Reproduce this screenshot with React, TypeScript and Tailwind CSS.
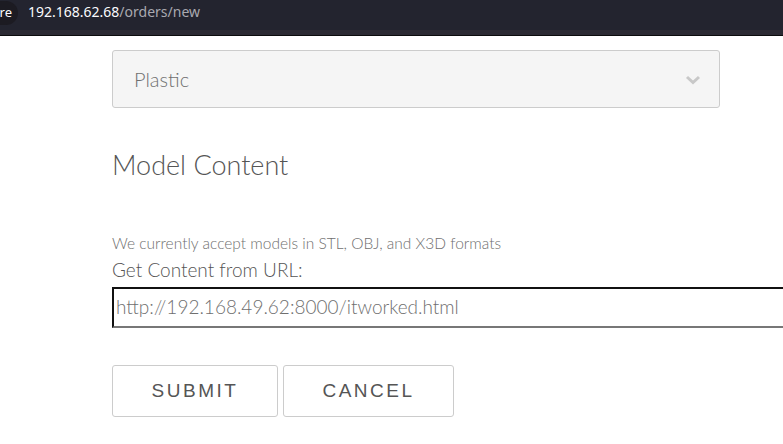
export default function App() {
  return (
    <div className="w-[783px] h-[444px] overflow-hidden bg-white font-['Lato',sans-serif]">
      {/* browser bar */}
      <div className="h-[36px] bg-[#2b2a33] border-b border-[#0c0c0d] flex items-start">
        <div className="h-[30px] w-full bg-[#23242f] flex items-start pt-[1px]">
          <div className="h-[24px] w-[58px] -ml-[40px] rounded-full bg-[#1c1b22] flex items-center justify-end pr-[6px] text-[13px] text-[#fbfbfe] font-['Noto_Sans',sans-serif]">
            re
          </div>
          <div className="ml-[10px] mt-[1px] text-[14px] leading-[20px] font-['Noto_Sans',sans-serif] text-[#fbfbfe]">
            192.168.62.68<span className="text-[#a9a9b0]">/orders/new</span>
          </div>
        </div>
      </div>

      <div className="pl-[112px]">
        <div className="mt-[14px] w-[608px] h-[58px] rounded-[3px] border border-[#ccc] bg-[#f5f5f5] flex items-center justify-between pl-[21px] pr-[18px]">
          <span className="text-[20px] font-light text-[#6f6f6f]">Plastic</span>
          <svg width="16" height="10" viewBox="0 0 16 10" className="mt-[2px]">
            <path d="M2 2l6 5.5L14 2" fill="none" stroke="#c8c8c8" strokeWidth="3" />
          </svg>
        </div>

        <h2 className="mt-[40px] text-[27px] leading-[34px] font-light text-[#555]">Model Content</h2>

        <p className="mt-[51px] text-[15.5px] leading-[20px] font-light text-[#6f6f6f]">
          We currently accept models in STL, OBJ, and X3D formats
        </p>
        <label className="block mt-[5px] text-[19px] leading-[24px] font-light text-[#555]">
          Get Content from URL:
        </label>
        <div className="mt-[5px] h-[41px] border-t-2 border-l-2 border-[#111] border-b-2 border-b-[#777] flex items-center pl-[2px]">
          <span className="text-[19px] font-light text-[#6f6f6f]">http://192.168.49.62:8000/itworked.html</span>
        </div>

        <div className="mt-[37px] flex gap-[5px]">
          <button className="w-[166px] h-[52px] rounded-[3px] border border-[#ccc] bg-white text-[19px] tracking-[2.5px] text-[#555] font-['Liberation_Sans',sans-serif]">
            SUBMIT
          </button>
          <button className="w-[171px] h-[52px] rounded-[3px] border border-[#ccc] bg-white text-[19px] tracking-[2.5px] text-[#555] font-['Liberation_Sans',sans-serif]">
            CANCEL
          </button>
        </div>
      </div>
    </div>
  )
}
